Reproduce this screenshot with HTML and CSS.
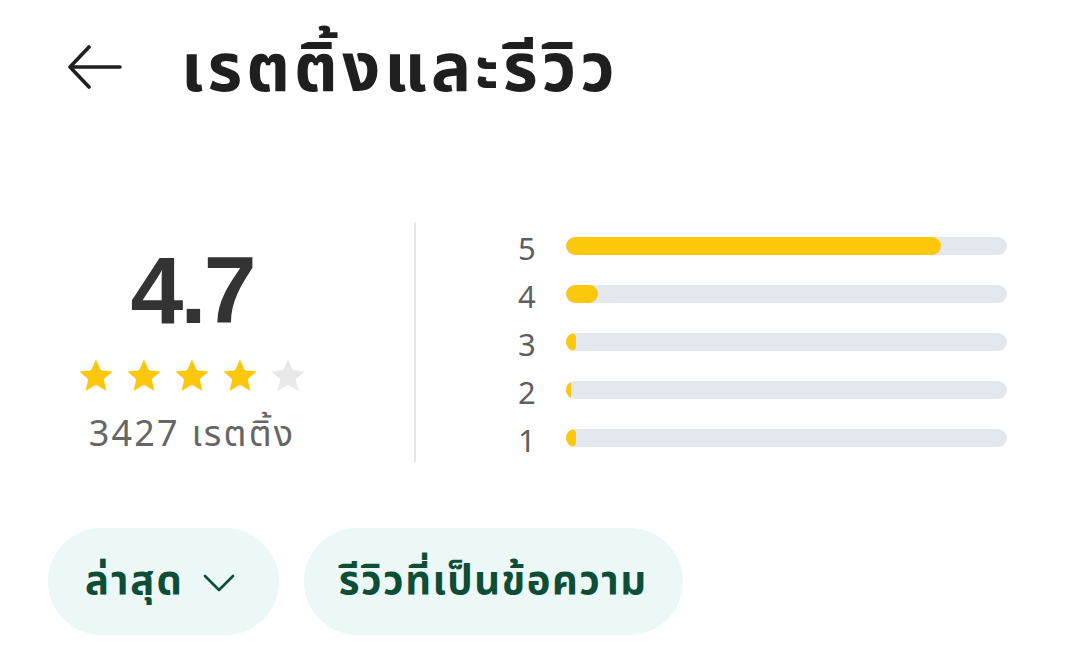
FILE: index.html
```html
<!DOCTYPE html>
<html lang="th">
<head>
<meta charset="utf-8">
<title>เรตติ้งและรีวิว</title>
<link rel="stylesheet" href="styles.css">
</head>
<body>
<div class="page">
  <header class="header">
    <button class="back" aria-label="กลับ">
      <svg width="56" height="44" viewBox="0 0 56 44"><path d="M53 22H3M22 2L3 22L22 42" fill="none" stroke="#1f1f1f" stroke-width="3.6" stroke-linecap="round" stroke-linejoin="round"/></svg>
    </button>
    <h1 class="title">เรตติ้งและรีวิว</h1>
  </header>

  <section class="summary">
    <div class="score">
      <div class="avg">4.7</div>
      <div class="stars">
        <svg class="star on" viewBox="0 0 24 24"><path d="M12 1.5l3.1 6.9 7.4.7-5.6 5 1.7 7.4L12 17.6l-6.6 3.9 1.7-7.4-5.6-5 7.4-.7z"/></svg>
        <svg class="star on" viewBox="0 0 24 24"><path d="M12 1.5l3.1 6.9 7.4.7-5.6 5 1.7 7.4L12 17.6l-6.6 3.9 1.7-7.4-5.6-5 7.4-.7z"/></svg>
        <svg class="star on" viewBox="0 0 24 24"><path d="M12 1.5l3.1 6.9 7.4.7-5.6 5 1.7 7.4L12 17.6l-6.6 3.9 1.7-7.4-5.6-5 7.4-.7z"/></svg>
        <svg class="star on" viewBox="0 0 24 24"><path d="M12 1.5l3.1 6.9 7.4.7-5.6 5 1.7 7.4L12 17.6l-6.6 3.9 1.7-7.4-5.6-5 7.4-.7z"/></svg>
        <svg class="star off" viewBox="0 0 24 24"><path d="M12 1.5l3.1 6.9 7.4.7-5.6 5 1.7 7.4L12 17.6l-6.6 3.9 1.7-7.4-5.6-5 7.4-.7z"/></svg>
      </div>
      <div class="count">3427 เรตติ้ง</div>
    </div>
    <div class="divider"></div>
    <div class="bars">
      <div class="row"><span class="lbl">5</span><div class="track"><div class="fill" style="width:85%"></div></div></div>
      <div class="row"><span class="lbl">4</span><div class="track"><div class="fill" style="width:7.2%"></div></div></div>
      <div class="row"><span class="lbl">3</span><div class="track"><div class="fill" style="width:2.2%"></div></div></div>
      <div class="row"><span class="lbl">2</span><div class="track"><div class="fill" style="width:1.2%"></div></div></div>
      <div class="row"><span class="lbl">1</span><div class="track"><div class="fill" style="width:2.2%"></div></div></div>
    </div>
  </section>

  <div class="chips">
    <button class="chip chip-sort">ล่าสุด
      <svg class="chev" width="32" height="18" viewBox="0 0 32 18"><path d="M2 2L16 16L30 2" fill="none" stroke="#0e4d36" stroke-width="2.6" stroke-linecap="round" stroke-linejoin="round"/></svg>
    </button>
    <button class="chip chip-text">รีวิวที่เป็นข้อความ</button>
  </div>
</div>
</body>
</html>
```
FILE: styles.css
```css
* { box-sizing: border-box; }
html, body { margin: 0; padding: 0; background: #fff; }
body {
  font-family: "Noto Sans", "Noto Sans Thai", "Liberation Sans", sans-serif;
  color: #1f1f1f;
  width: 1080px;
  height: 657px;
  overflow: hidden;
}

.header {
  display: flex;
  align-items: center;
  height: 140px;
  padding-left: 67px;
}
.back {
  border: 0;
  background: none;
  padding: 0;
  width: 56px;
  height: 44px;
  display: flex;
  margin-top: -6px;
  margin-right: 58px;
}
.title {
  margin: 0 0 10px 0;
  font-size: 67px;
  font-weight: 700;
  letter-spacing: 4px;
  line-height: 1;
  color: #1f1f1f;
}

.summary {
  display: flex;
  align-items: stretch;
  margin-top: 82px;
  height: 240px;
}
.score {
  width: 384px;
  display: flex;
  flex-direction: column;
  align-items: center;
}
.avg {
  font-family: "Liberation Sans", Arial, sans-serif;
  font-weight: 700;
  font-size: 95px;
  letter-spacing: -3px;
  line-height: 1;
  color: #333;
  margin-top: 21px;
}
.stars {
  display: flex;
  gap: 10px;
  margin-top: 19px;
}
.star { width: 38px; height: 38px; }
.star.on { fill: #fdc70c; }
.star.off { fill: #e8e8e8; }
.count {
  font-size: 36px;
  letter-spacing: 2.2px;
  color: #666;
  margin-top: 16px;
  line-height: 1.2;
}
.divider {
  width: 2px;
  background: #e6e6e6;
  margin-left: 30px;
}
.bars {
  display: flex;
  flex-direction: column;
  padding-left: 102px;
  padding-top: 9px;
  gap: 18px;
}
.row {
  display: flex;
  align-items: center;
  height: 30px;
}
.lbl {
  width: 48px;
  font-size: 31px;
  color: #5f5f5f;
  line-height: 30px;
  padding-top: 3px;
}
.track {
  width: 441px;
  height: 18px;
  border-radius: 9px;
  background: #e3e7ee;
  overflow: hidden;
}
.fill {
  height: 100%;
  background: #fdc70c;
  border-radius: 9px;
}

.chips {
  display: flex;
  gap: 25px;
  padding-left: 48px;
  margin-top: 66px;
}
.chip {
  height: 107px;
  border: 0;
  border-radius: 54px;
  background: #ebf8f7;
  color: #0e4d36;
  font-family: inherit;
  font-size: 40px;
  font-weight: 700;
  letter-spacing: 2px;
  display: flex;
  align-items: center;
}
.chip-sort {
  padding: 0 44px 0 37px;
  gap: 19px;
}
.chip-text {
  padding: 0 35px 0 35px;
  letter-spacing: 1.5px;
}
.chip .chev { margin-top: 2px; }
```
